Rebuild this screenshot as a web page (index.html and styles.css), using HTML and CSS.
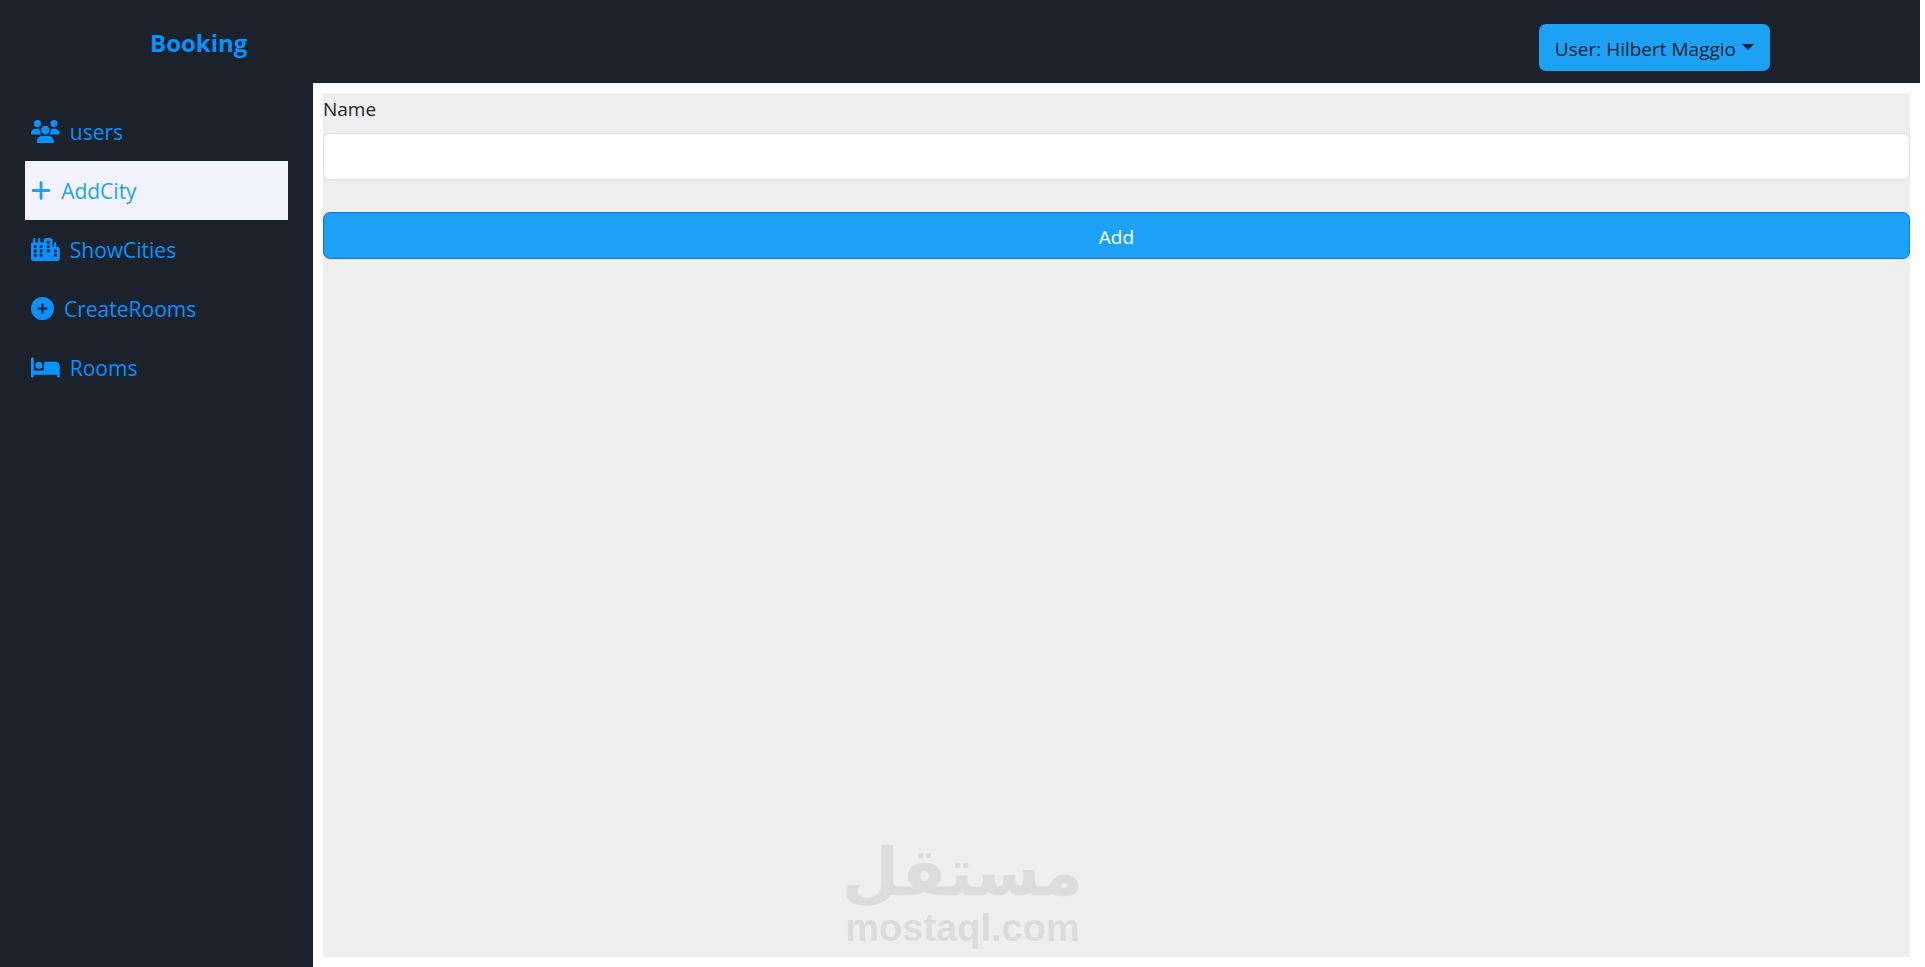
FILE: index.html
```html
<!DOCTYPE html>
<html lang="en">
	<head>
		<meta charset="UTF-8" />
		<meta name="viewport" content="width=device-width, initial-scale=1.0" />
		<title>Booking</title>
		<link rel="stylesheet" href="styles.css">
	</head>
	<body>
		<header class="topbar">
			<h1 class="brand">Booking</h1>
			<button type="button" class="user-btn">User: Hilbert Maggio</button>
		</header>

		<div class="dashboard">
			<nav class="sidebar">
				<a href="#users" class="side-link">
					<svg class="icon" viewBox="0 0 640 512"><path d="M144 0a80 80 0 1 1 0 160A80 80 0 1 1 144 0zM512 0a80 80 0 1 1 0 160A80 80 0 1 1 512 0zM0 298.7C0 239.8 47.8 192 106.7 192h42.7c15.9 0 31 3.5 44.6 9.7c-1.3 7.2-1.9 14.7-1.9 22.3c0 38.2 16.8 72.5 43.3 96c-.2 0-.4 0-.7 0H21.3C9.6 320 0 310.4 0 298.7zM405.3 320c-.2 0-.4 0-.7 0c26.6-23.5 43.3-57.8 43.3-96c0-7.6-.7-15-1.9-22.3c13.6-6.3 28.7-9.7 44.6-9.7h42.7C592.2 192 640 239.8 640 298.7c0 11.8-9.6 21.3-21.3 21.3H405.3zM224 224a96 96 0 1 1 192 0 96 96 0 1 1 -192 0zM128 485.3C128 411.7 187.7 352 261.3 352H378.7C452.3 352 512 411.7 512 485.3c0 14.7-11.9 26.7-26.7 26.7H154.7c-14.7 0-26.7-11.9-26.7-26.7z"/></svg>
					<span>users</span>
				</a>
				<a href="#add-city" class="side-link active">
					<svg class="icon" viewBox="0 0 448 512"><path d="M256 80c0-17.700-14.300-32-32-32s-32 14.300-32 32V224H48c-17.700 0-32 14.300-32 32s14.300 32 32 32H192V432c0 17.700 14.300 32 32 32s32-14.300 32-32V288H400c17.700 0 32-14.300 32-32s-14.300-32-32-32H256V80z"/></svg>
					<span>AddCity</span>
				</a>
				<a href="#cities" class="side-link">
					<svg class="icon" viewBox="0 0 640 512"><path fill-rule="evenodd" d="M72 0c13.300 0 24 10.700 24 24V96h64V24c0-13.300 10.700-24 24-24s24 10.700 24 24V96h80V48c0-26.500 21.500-48 48-48h96c26.500 0 48 21.500 48 48V192h32V120c0-13.300 10.700-24 24-24s24 10.700 24 24v72h32c26.500 0 48 21.500 48 48V464c0 26.500-21.500 48-48 48H48c-26.500 0-48-21.500-48-48V144c0-26.500 21.500-48 48-48V24c0-13.300 10.700-24 24-24zM64 176v32c0 8.800 7.200 16 16 16h32c8.800 0 16-7.200 16-16V176c0-8.800-7.200-16-16-16H80c-8.800 0-16 7.200-16 16zM80 256c-8.800 0-16 7.200-16 16v32c0 8.800 7.200 16 16 16h32c8.800 0 16-7.200 16-16V272c0-8.800-7.200-16-16-16H80zM64 368v32c0 8.800 7.200 16 16 16h32c8.800 0 16-7.200 16-16V368c0-8.800-7.200-16-16-16H80c-8.800 0-16 7.200-16 16zM208 160c-8.800 0-16 7.200-16 16v32c0 8.800 7.200 16 16 16h32c8.800 0 16-7.200 16-16V176c0-8.800-7.200-16-16-16H208zM192 272v32c0 8.800 7.200 16 16 16h32c8.800 0 16-7.200 16-16V272c0-8.800-7.200-16-16-16H208c-8.800 0-16 7.200-16 16zM208 352c-8.800 0-16 7.200-16 16v32c0 8.800 7.200 16 16 16h32c8.800 0 16-7.200 16-16V368c0-8.800-7.200-16-16-16H208zM352 80v32c0 8.800 7.200 16 16 16h32c8.800 0 16-7.200 16-16V80c0-8.800-7.200-16-16-16H368c-8.800 0-16 7.200-16 16zM368 160c-8.800 0-16 7.200-16 16v32c0 8.800 7.200 16 16 16h32c8.800 0 16-7.200 16-16V176c0-8.800-7.200-16-16-16H368zM352 272v32c0 8.800 7.200 16 16 16h32c8.800 0 16-7.200 16-16V272c0-8.800-7.200-16-16-16H368c-8.800 0-16 7.200-16 16zM528 256c-8.800 0-16 7.200-16 16v32c0 8.800 7.200 16 16 16h32c8.800 0 16-7.200 16-16V272c0-8.800-7.200-16-16-16H528zM512 368v32c0 8.800 7.200 16 16 16h32c8.800 0 16-7.200 16-16V368c0-8.800-7.200-16-16-16H528c-8.800 0-16 7.200-16 16z"/></svg>
					<span>ShowCities</span>
				</a>
				<a href="#create-rooms" class="side-link">
					<svg class="icon" viewBox="0 0 512 512"><path d="M256 512A256 256 0 1 0 256 0a256 256 0 1 0 0 512zM232 344V280H168c-13.300 0-24-10.700-24-24s10.700-24 24-24h64V168c0-13.300 10.700-24 24-24s24 10.700 24 24v64h64c13.300 0 24 10.700 24 24s-10.700 24-24 24H280v64c0 13.300-10.700 24-24 24s-24-10.700-24-24z"/></svg>
					<span>CreateRooms</span>
				</a>
				<a href="#rooms" class="side-link">
					<svg class="icon" viewBox="0 0 640 512"><path d="M32 32c17.700 0 32 14.300 32 32V320H288V160c0-17.700 14.300-32 32-32H544c53 0 96 43 96 96V448c0 17.700-14.300 32-32 32s-32-14.300-32-32V416H64v32c0 17.700-14.300 32-32 32s-32-14.300-32-32V64C0 46.300 14.300 32 32 32zM176 128a80 80 0 1 1 0 160 80 80 0 1 1 0-160z"/></svg>
					<span>Rooms</span>
				</a>
			</nav>

			<main class="content">
				<form class="city-form">
					<label for="name">Name</label>
					<input type="text" id="name" name="name" />
					<button type="submit" class="add-btn">Add</button>
				</form>
			</main>
		</div>

		<div class="watermark">
			<span class="watermark-ar" lang="ar" dir="rtl">مستقل</span>
			<span class="watermark-en">mostaql.com</span>
		</div>
	</body>
</html>
```
FILE: styles.css
```css
* {
	box-sizing: border-box;
}

body {
	display: flex;
	flex-direction: column;
	min-height: 100vh;
	margin: 0;
	padding-right: 5px;
	background: #fff;
	color: #212529;
	font-family: "Segoe UI", "Open Sans", "Noto Sans", sans-serif;
	font-size: 19px;
	line-height: 30px;
}

button,
input {
	font: inherit;
}

/* Top bar */
.topbar {
	display: flex;
	align-items: flex-start;
	justify-content: space-between;
	height: 83px;
	padding: 24px 150px 0;
	background: #1c222c;
}

.brand {
	margin: 4px 0 0;
	color: #0892ff;
	font-size: 24px;
	font-weight: 700;
	line-height: 30px;
}

.user-btn {
	display: flex;
	align-items: center;
	gap: 6px;
	height: 47px;
	padding: 2px 16px 0;
	border: 0;
	border-radius: 7px;
	background: #1da1f5;
	color: #1c222c;
	cursor: pointer;
}

.user-btn::after {
	content: "";
	margin-bottom: 4px;
	border-top: 6px solid;
	border-right: 6px solid transparent;
	border-left: 6px solid transparent;
}

/* Sidebar */
.dashboard {
	display: flex;
	flex: 1;
}

.sidebar {
	flex: 0 0 313px;
	padding: 19px 25px;
	background: #1c222c;
}

.side-link {
	display: flex;
	align-items: center;
	gap: 10px;
	height: 59px;
	padding: 0 6px;
	color: #0892ff;
	font-size: 21px;
	text-decoration: none;
}

.side-link.active {
	background: #f3f3ff;
	color: #1da1f5;
}

.icon {
	height: 23px;
	fill: currentColor;
}

/* Content */
.content {
	display: flex;
	flex: 1;
	padding: 10px;
}

.city-form {
	display: flex;
	flex: 1;
	flex-direction: column;
	background: #eee;
}

.city-form label {
	padding-top: 1px;
	margin-bottom: 9px;
}

.city-form input {
	width: 100%;
	height: 47px;
	margin-bottom: 32px;
	padding: 8px 15px;
	border: 1px solid #dee2e6;
	border-radius: 7px;
	background: #fff;
}

.add-btn {
	height: 47px;
	padding: 2px 16px 0;
	border: 1px solid #0d6efd;
	border-radius: 7px;
	background: #1da1f5;
	color: #fff;
	cursor: pointer;
}

/* Watermark */
.watermark {
	position: fixed;
	bottom: 17px;
	left: 50%;
	display: flex;
	flex-direction: column;
	align-items: center;
	transform: translateX(-50%);
	color: #dcdcdc;
	font-weight: 700;
	pointer-events: none;
}

.watermark-ar {
	font-family: "DejaVu Sans", sans-serif;
	font-size: 66px;
	line-height: 66px;
}

.watermark-en {
	font-family: "Liberation Sans", sans-serif;
	font-size: 38px;
	line-height: 44px;
}
```
